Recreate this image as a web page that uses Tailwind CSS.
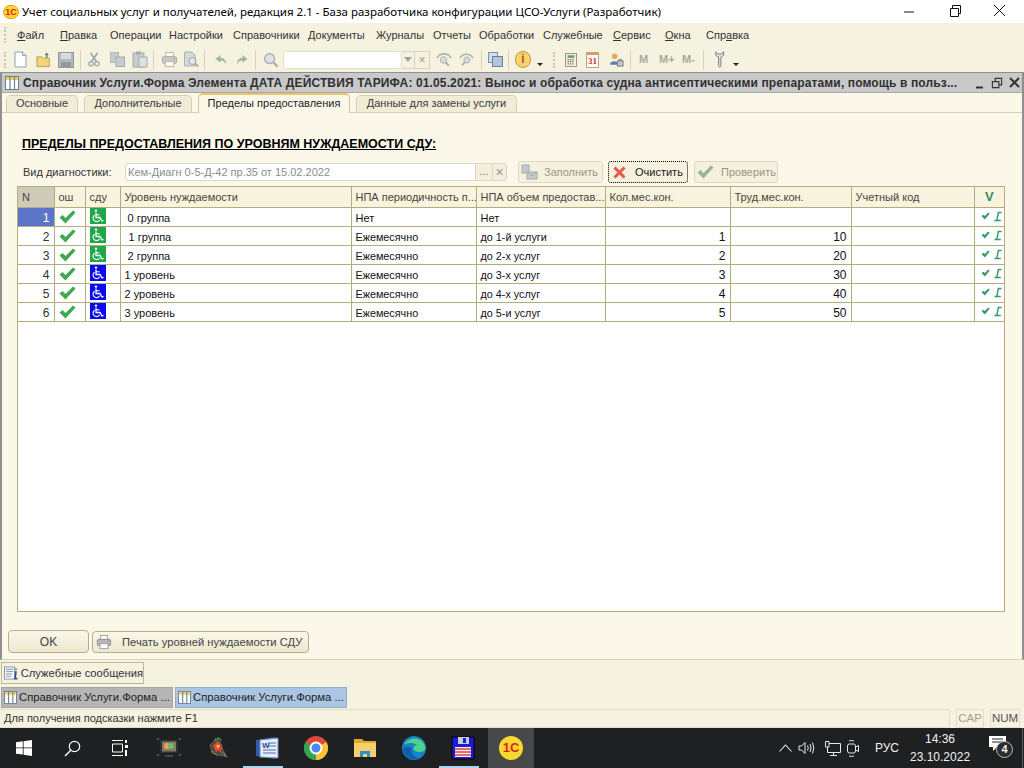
<!DOCTYPE html>
<html lang="ru">
  <head>
    <meta charset="utf-8" />
    <title>Учет социальных услуг</title>
    <script src="https://cdn.jsdelivr.net/npm/@tailwindcss/browser@4"></script>
  </head>
  <body class="w-[1024px] h-[768px] overflow-hidden flex flex-col bg-[#f5f2df] text-[11px] text-[#222] font-['Liberation_Sans',sans-serif]">
    <!-- shared icons -->
    <svg class="hidden">
      <symbol id="check" viewBox="0 0 17 14"><path d="M0.5 7.5 L3.5 5 L6.5 8 L14 0.5 L16.5 2.5 L6.5 13.5 Z" fill="#3fa850" /></symbol>
      <symbol id="wheel" viewBox="0 0 16 16">
        <circle cx="6" cy="2.6" r="1.2" fill="#fff" />
        <path d="M6 4.5 V9.5 H10 L12 13 L13.5 12.3" fill="none" stroke="#fff" stroke-width="1.3" />
        <path d="M6 6.8 H9.5" stroke="#fff" stroke-width="1.1" />
        <path d="M4.6 7.2 A3.5 3.5 0 1 0 9.6 11.8" fill="none" stroke="#fff" stroke-width="1.1" />
      </symbol>
      <symbol id="tick" viewBox="0 0 10 10"><path d="M0.5 5 L3 3.5 L4.3 5 L8 1 L9.6 2.5 L4.3 8.8 Z" fill="#3b9a6a" /></symbol>
      <symbol id="ibar" viewBox="0 0 10 12"><path d="M4.5 1 H9.5 M5.5 1 L3.5 11 M0.5 11 H8.5" fill="none" stroke="#3b9a6a" stroke-width="1.8" /></symbol>
      <symbol id="grid3" viewBox="0 0 14 14">
        <rect x="0.5" y="0.5" width="13" height="13" fill="#fff" stroke="#6b7f96" />
        <rect x="1" y="1" width="12" height="3" fill="#f2d25e" />
        <path d="M5 1 V13 M9.5 1 V13" stroke="#6b7f96" stroke-width="1.2" />
      </symbol>
      <symbol id="lens" viewBox="0 0 18 18"><circle cx="7.5" cy="7.5" r="5.5" fill="#dfe3e6" stroke="#aab2b5" stroke-width="1.6" /><path d="M12 12 L16.5 16.5" stroke="#b5a98a" stroke-width="2.4" /></symbol>
      <symbol id="printer" viewBox="0 0 18 18">
        <rect x="5" y="1.5" width="8" height="5" fill="#fff" stroke="#9a9a9a" />
        <rect x="1.5" y="6" width="15" height="7" rx="1.5" fill="#b8b8b8" stroke="#8a8a8a" />
        <rect x="4.5" y="11" width="9" height="5.5" fill="#fff" stroke="#9a9a9a" />
        <circle cx="14" cy="8" r="0.8" fill="#d05050" />
      </symbol>
    </svg>

    <!-- title bar -->
    <header class="h-[23px] shrink-0 bg-white flex items-center">
      <div class="ml-[3px] w-[16px] h-[14px] rounded-full bg-[#fbd52f] border border-[#e3a21a] text-[#d8261c] text-[9px] leading-[12px] font-bold text-center">1С</div>
      <span class="ml-[3px] text-[11.5px] text-black font-['Noto_Sans',sans-serif] whitespace-nowrap">Учет социальных услуг и получателей, редакция 2.1 - База разработчика конфигурации ЦСО-Услуги (Разработчик)</span>
      <div class="ml-auto mr-[2px] flex items-center text-black">
        <svg class="w-[45px] h-[23px]" viewBox="0 0 45 23"><path d="M18 12 H28" stroke="#111" /></svg>
        <svg class="w-[45px] h-[23px]" viewBox="0 0 45 23"><path d="M19.5 8.5 H27.5 V16.5 H19.5 Z M21.5 8 V5.5 H29.5 V13.5 H27.5" fill="none" stroke="#111" /></svg>
        <svg class="w-[46px] h-[23px]" viewBox="0 0 46 23"><path d="M18 5 L29 16 M29 5 L18 16" stroke="#111" /></svg>
      </div>
    </header>

    <!-- menu -->
    <nav class="h-[24px] shrink-0 flex items-center text-[#333] whitespace-nowrap">
      <div class="ml-[4px] w-[13px] h-[16px] border-l-2 border-dotted border-[#c9c5b0]"></div>
      <span class="w-[43px]"><u>Ф</u>айл</span>
      <span class="w-[50px]"><u>П</u>равка</span>
      <span class="w-[59px]">Операции</span>
      <span class="w-[64px]">Настройки</span>
      <span class="w-[75px]">Справочники</span>
      <span class="w-[68px]">Документы</span>
      <span class="w-[57px]">Журналы</span>
      <span class="w-[46px]">Отчеты</span>
      <span class="w-[64px]">Обработки</span>
      <span class="w-[70px]">Служебные</span>
      <span class="w-[52px]"><u>С</u>ервис</span>
      <span class="w-[41px]"><u>О</u>кна</span>
      <span>Спр<u>а</u>вка</span>
    </nav>

    <!-- toolbar -->
    <div class="h-[25px] shrink-0 flex items-center">
      <div class="ml-[4px] w-[2px] h-[16px] border-l-2 border-dotted border-[#c9c5b0]"></div>
      <svg class="ml-[8px] w-[13px] h-[17px]" viewBox="0 0 13 17"><path d="M1 1 H8.5 L12 4.5 V16 H1 Z" fill="#fff" stroke="#8ea3b8" /><path d="M8.5 1 V4.5 H12" fill="#dbe4ee" stroke="#8ea3b8" /></svg>
      <svg class="ml-[9px] w-[16px] h-[17px]" viewBox="0 0 18 18"><path d="M1 6 H7 L8.5 7.5 H15 V17 H1 Z" fill="#f4d47a" stroke="#b59a45" /><path d="M12 1 L9.5 4 H11 V7 H13 V4 H14.5 Z" fill="#5a8f5a" /></svg>
      <svg class="ml-[6px] w-[16px] h-[16px]" viewBox="0 0 16 16"><rect x="0.5" y="0.5" width="15" height="15" fill="#b3b9bb" stroke="#94999b" /><rect x="3" y="1" width="10" height="6" fill="#d8dcdd" /><rect x="3" y="10" width="10" height="5" fill="#94999b" /></svg>
      <div class="ml-[6px] w-px h-[20px] bg-[#d5d1bb]"></div>
      <svg class="ml-[7px] w-[12px] h-[17px]" viewBox="0 0 14 17"><path d="M3 1 L10 11 M11 1 L4 11" stroke="#9aa7ae" stroke-width="2" /><circle cx="3.5" cy="13.5" r="2.5" fill="none" stroke="#9aa7ae" stroke-width="1.5" /><circle cx="10.5" cy="13.5" r="2.5" fill="none" stroke="#9aa7ae" stroke-width="1.5" /></svg>
      <svg class="ml-[10px] w-[15px] h-[15px]" viewBox="0 0 15 15"><rect x="0.5" y="0.5" width="8" height="10" fill="#c6ccce" stroke="#b3b9bb" /><rect x="6" y="5" width="8.5" height="9.5" fill="#c6ccce" stroke="#a5abad" /></svg>
      <svg class="ml-[7px] w-[16px] h-[17px]" viewBox="0 0 16 17"><rect x="1" y="2" width="11" height="14" fill="#c6ccce" stroke="#a5abad" /><rect x="4" y="0.5" width="5" height="3" fill="#a5abad" /><rect x="7" y="6" width="8" height="10" fill="#dfe2e3" stroke="#a5abad" /></svg>
      <div class="ml-[5px] w-px h-[20px] bg-[#d5d1bb]"></div>
      <svg class="ml-[7px] w-[17px] h-[17px] opacity-70" viewBox="0 0 18 18"><use href="#printer" /></svg>
      <svg class="ml-[5px] w-[16px] h-[17px]" viewBox="0 0 16 17"><path d="M1.5 1 H9 L12 4 V15 H1.5 Z" fill="#d3d8da" stroke="#aeb4b6" /><circle cx="9.5" cy="10" r="3.5" fill="#e5e8e9" stroke="#99a0a2" /><path d="M12 12.5 L15 15.5" stroke="#b5a98a" stroke-width="2" /></svg>
      <div class="ml-[5px] w-px h-[20px] bg-[#d5d1bb]"></div>
      <svg class="ml-[10px] w-[12px] h-[11px]" viewBox="0 0 13 11"><path d="M6 0.5 L0.5 5 L6 9 V6.5 C9 6.5 10.5 8 12 10.5 C12 6 9.5 3.5 6 3.5 Z" fill="#a3b6ac" /></svg>
      <svg class="ml-[9px] w-[12px] h-[11px]" viewBox="0 0 13 11"><path d="M7 0.5 L12.5 5 L7 9 V6.5 C4 6.5 2.5 8 1 10.5 C1 6 3.5 3.5 7 3.5 Z" fill="#a3b6ac" /></svg>
      <div class="ml-[7px] w-px h-[20px] bg-[#d5d1bb]"></div>
      <svg class="ml-[7px] w-[16px] h-[16px]" viewBox="0 0 18 18"><use href="#lens" /></svg>
      <div class="ml-[4px] w-[119px] h-[18px] bg-white rounded-[3px] border border-[#e2decb]"></div>
      <div class="w-[13px] h-[18px] flex items-center justify-center border border-l-0 border-[#d5d1bb]"><span class="border-x-[4px] border-t-[5px] border-x-transparent border-t-[#a0a4a5]"></span></div>
      <div class="w-[15px] h-[18px] flex items-center justify-center border border-l-0 border-[#d5d1bb] text-[#9aa0a2] text-[12px] leading-none">×</div>
      <svg class="ml-[6px] w-[16px] h-[16px]" viewBox="0 0 17 16"><path d="M1 6 C4 0 13 0 16 6" fill="none" stroke="#a9b8b0" stroke-width="1.8" /><circle cx="8" cy="8" r="3.5" fill="#d5dadb" stroke="#aab2b5" /><path d="M10.5 10.5 L13.5 14" stroke="#b5a98a" stroke-width="2" /></svg>
      <svg class="ml-[7px] w-[15px] h-[16px]" viewBox="0 0 17 16"><path d="M1 6 C4 0 13 0 16 6" fill="none" stroke="#a9b8b0" stroke-width="1.8" /><circle cx="9" cy="8" r="3.5" fill="#d5dadb" stroke="#aab2b5" /><path d="M6.5 10.5 L3.5 14" stroke="#b5a98a" stroke-width="2" /></svg>
      <div class="ml-[7px] w-px h-[20px] bg-[#d5d1bb]"></div>
      <svg class="ml-[6px] w-[15px] h-[15px]" viewBox="0 0 15 15"><rect x="0.5" y="0.5" width="9" height="10" fill="#cfe0ee" stroke="#7d8fa3" /><rect x="4.5" y="4.5" width="10" height="10" fill="#aec7de" stroke="#6c7f94" /></svg>
      <div class="ml-[5px] w-px h-[20px] bg-[#d5d1bb]"></div>
      <div class="ml-[6px] w-[16px] h-[17px] rounded-full bg-[#f6d46d] border border-[#c8973a] text-[#b5531c] text-[12px] leading-[15px] font-bold text-center">i</div>
      <span class="ml-[6px] mt-[10px] border-x-[3px] border-t-[3px] border-x-transparent border-t-[#222]"></span>
      <div class="ml-[10px] w-[2px] h-[16px] border-l-2 border-dotted border-[#c9c5b0]"></div>
      <svg class="ml-[10px] w-[12px] h-[16px]" viewBox="0 0 14 16"><rect x="0.5" y="0.5" width="13" height="15" fill="#eef0e6" stroke="#8c8f72" /><rect x="3" y="2.5" width="8" height="3" fill="#6f9a62" /><path d="M3 7.5 H11 M3 10 H11 M3 12.5 H11" stroke="#7a6a3a" stroke-dasharray="1.5 1.2" stroke-width="1.4" /></svg>
      <div class="ml-[9px] w-[13px] h-[16px] bg-white border border-[#b6a889] border-t-[3px] border-t-[#d79a6a] text-[#d92a1e] text-[9px] leading-[12px] font-bold text-center font-['Liberation_Serif',serif]">31</div>
      <svg class="ml-[10px] w-[15px] h-[16px]" viewBox="0 0 16 16"><circle cx="6" cy="4" r="3" fill="#e2a95c" /><path d="M1 13 C1 8 10 8 10 13 Z" fill="#5b7fb0" /><rect x="9" y="9" width="6" height="5.5" fill="#c4cbd0" stroke="#717b82" /><path d="M10.5 9 V7.5 H13.5 V9" fill="none" stroke="#717b82" /></svg>
      <div class="ml-[6px] w-px h-[20px] bg-[#d5d1bb]"></div>
      <div class="ml-[8px] w-[12px] text-[#a9a9a0] font-bold text-[11px]">M</div>
      <div class="ml-[8px] w-[18px] text-[#a9a9a0] font-bold text-[11px] whitespace-nowrap">M+</div>
      <div class="ml-[5px] w-[17px] text-[#a9a9a0] font-bold text-[11px] whitespace-nowrap">M-</div>
      <div class="ml-[4px] w-px h-[20px] bg-[#d5d1bb]"></div>
      <svg class="ml-[10px] w-[11px] h-[19px]" viewBox="0 0 12 19"><path d="M2 1 V5 L5 7 V16 C5 18.5 7.5 18.5 7.5 16 V7 L10.5 5 V1 L8 3.5 H4.5 Z" fill="#dfe1e0" stroke="#777" /></svg>
      <span class="ml-[8px] mt-[10px] border-x-[3px] border-t-[3px] border-x-transparent border-t-[#222]"></span>
    </div>

    <!-- document window -->
    <section class="flex-1 min-h-0 flex flex-col border-l-2 border-r-2 border-t border-b border-[#8f8f8f] border-b-[#d5d1bb] bg-[#fbf8ea]">
      <div class="h-[20px] shrink-0 bg-[#c9c9c9] flex items-center border-b border-[#a9a9a9]">
        <svg class="ml-[3px] w-[14px] h-[14px]" viewBox="0 0 14 14"><use href="#grid3" /></svg>
        <span class="ml-[4px] font-bold text-[12px] tracking-[0.13px] text-[#303030] whitespace-nowrap">Справочник Услуги.Форма Элемента ДАТА ДЕЙСТВИЯ ТАРИФА: 01.05.2021: Вынос и обработка судна антисептическими препаратами, помощь в польз...</span>
        <div class="ml-auto flex items-center gap-[6px] pr-[2px]">
          <svg class="w-[10px] h-[12px]" viewBox="0 0 10 12"><path d="M1 10.5 H8" stroke="#333" stroke-width="2" /></svg>
          <svg class="w-[12px] h-[12px]" viewBox="0 0 13 12"><path d="M1.5 4.5 H8.5 V11 H1.5 Z M4.5 4 V1 H11.5 V8 H9" fill="none" stroke="#333" stroke-width="1.2" /></svg>
          <svg class="w-[11px] h-[11px]" viewBox="0 0 11 11"><path d="M1 1 L10 10 M10 1 L1 10" stroke="#333" stroke-width="2" /></svg>
        </div>
      </div>

      <!-- tabs -->
      <div class="h-[19px] shrink-0 flex items-end pl-[4px] gap-[6px] text-[#3a3a3a] relative z-10 whitespace-nowrap">
        <div class="w-[72px] h-[17px] leading-[15px] text-center bg-[#f1ecd6] border border-b-0 border-[#d6d0b2] rounded-t-[5px]">Основные</div>
        <div class="w-[108px] h-[17px] leading-[15px] text-center bg-[#f1ecd6] border border-b-0 border-[#d6d0b2] rounded-t-[5px]">Дополнительные</div>
        <div class="w-[152px] h-[20px] leading-[17px] text-center text-[#222] bg-[#fbf8ea] border border-b-0 border-t-2 border-[#d6c690] border-t-[#ecc46a] rounded-t-[5px] -mb-px">Пределы предоставления</div>
        <div class="w-[161px] h-[17px] leading-[15px] text-center bg-[#f1ecd6] border border-b-0 border-[#d6d0b2] rounded-t-[5px]">Данные для замены услуги</div>
      </div>

      <div class="flex-1 min-h-0 flex flex-col border-t border-[#d6d0b2] pl-[15px] pr-[17px]">
        <h1 class="pl-[5px] mt-[24px] h-[16px] text-[12.5px] leading-[15px] font-bold text-black underline whitespace-nowrap">ПРЕДЕЛЫ ПРЕДОСТАВЛЕНИЯ ПО УРОВНЯМ НУЖДАЕМОСТИ СДУ:</h1>

        <!-- diagnostics row -->
        <div class="mt-[7px] h-[24px] flex items-center pl-[6px] text-[#333] whitespace-nowrap">
          <span class="w-[102px]">Вид диагностики:</span>
          <div class="w-[351px] h-[18px] leading-[16px] pl-[2px] bg-white rounded-l-[3px] border border-[#d9d6c6] text-[#8c8c8c]">Кем-Диагн 0-5-Д-42 пр.35 от 15.02.2022</div>
          <div class="w-[16px] h-[18px] leading-[14px] text-center bg-[#f3efdc] border-y border-[#d9d6c6] text-[#777]">...</div>
          <div class="w-[15px] h-[18px] flex items-center justify-center bg-[#f3efdc] border border-[#d9d6c6] rounded-r-[3px] text-[#8f9394] text-[14px] leading-none">×</div>
          <button class="ml-[11px] w-[85px] h-[22px] flex items-center bg-[#f5f1dc] border border-[#dcd8c0] rounded-[3px] text-[#999586]">
            <svg class="ml-[2px] w-[17px] h-[17px]" viewBox="0 0 17 17"><rect x="1" y="1" width="7" height="8" fill="#c3c9cb" stroke="#a8aeb0" /><rect x="6" y="8" width="10" height="7" fill="#c3c9cb" stroke="#a8aeb0" /><path d="M6 8 L11 12 L16 8" fill="none" stroke="#a8aeb0" /></svg>
            <span class="ml-[6px]">Заполнить</span>
          </button>
          <button class="ml-[5px] w-[80px] h-[22px] flex items-center bg-[#f5f1dc] border border-dotted border-black rounded-[3px] text-[#222]">
            <svg class="ml-[4px] w-[13px] h-[13px]" viewBox="0 0 13 13"><path d="M1.5 1.5 L11.5 11.5 M11.5 1.5 L1.5 11.5" stroke="#e6584a" stroke-width="3" /></svg>
            <span class="ml-[9px]">Очистить</span>
          </button>
          <button class="ml-[6px] w-[84px] h-[22px] flex items-center bg-[#f5f1dc] border border-[#dcd8c0] rounded-[3px] text-[#999586]">
            <svg class="ml-[2px] w-[17px] h-[14px]" viewBox="0 0 17 14"><path d="M0.5 7.5 L3.5 5 L6.5 8 L14 0.5 L16.5 2.5 L6.5 13.5 Z" fill="#9db19c" /></svg>
            <span class="ml-[7px]">Проверить</span>
          </button>
        </div>

        <!-- table -->
        <div class="mt-[2px] h-[426px] bg-white border border-[#b5aa80] overflow-hidden">
          <table class="table-fixed border-collapse w-[986px] text-[10.8px] text-[#111]">
            <colgroup>
              <col class="w-[36px]" /><col class="w-[31px]" /><col class="w-[35px]" /><col class="w-[231px]" /><col class="w-[125px]" /><col class="w-[129px]" /><col class="w-[125px]" /><col class="w-[121px]" /><col class="w-[123px]" /><col class="w-[30px]" />
            </colgroup>
            <thead class="text-[11px] text-[#4a4635] font-normal">
              <tr class="h-[20px] bg-[#f7f3df]">
                <th class="bg-[#cfcbb8] border border-t-0 border-l-0 border-[#b5aa80] font-normal text-left pl-[4px]">N</th>
                <th class="border border-t-0 border-[#b5aa80] font-normal text-left pl-[4px]">ош</th>
                <th class="border border-t-0 border-[#b5aa80] font-normal text-left pl-[4px]">сду</th>
                <th class="border border-t-0 border-[#b5aa80] font-normal text-left pl-[4px]">Уровень нуждаемости</th>
                <th class="border border-t-0 border-[#b5aa80] font-normal text-left pl-[4px] whitespace-nowrap overflow-hidden">НПА периодичность п...</th>
                <th class="border border-t-0 border-[#b5aa80] font-normal text-left pl-[4px] whitespace-nowrap overflow-hidden">НПА объем предостав...</th>
                <th class="border border-t-0 border-[#b5aa80] font-normal text-left pl-[4px]">Кол.мес.кон.</th>
                <th class="border border-t-0 border-[#b5aa80] font-normal text-left pl-[4px]">Труд.мес.кон.</th>
                <th class="border border-t-0 border-[#b5aa80] font-normal text-left pl-[4px]">Учетный код</th>
                <th class="border border-t-0 border-r-0 border-[#b5aa80] font-bold text-center text-[13px] text-[#3b8a5e]">V</th>
              </tr>
            </thead>
            <tbody class="leading-[14px] [&>tr>td:not(.align-top)]:pt-[2px]">
              <tr class="h-[19px]">
                <td class="bg-[#5b76c8] text-white text-right pr-[4px] text-[12px] border border-l-0 border-[#b5aa80]">1</td>
                <td class="border border-[#b5aa80] pl-[4px] pt-[2px] align-top"><svg class="block w-[17px] h-[14px]"><use href="#check" /></svg></td>
                <td class="border border-[#b5aa80] pl-[4px] align-top"><div class="w-[16px] h-[16px] bg-[#21a64a]"><svg class="w-[16px] h-[16px]"><use href="#wheel" /></svg></div></td>
                <td class="border border-[#b5aa80] pl-[7px] text-[11px]">0 группа</td>
                <td class="border border-[#b5aa80] pl-[4px] text-[11px]">Нет</td>
                <td class="border border-[#b5aa80] pl-[4px] text-[11px]">Нет</td>
                <td class="border border-[#b5aa80] text-right pr-[4px] text-[12px]"></td>
                <td class="border border-[#b5aa80] text-right pr-[4px] text-[12px]"></td>
                <td class="border border-[#b5aa80]"></td>
                <td class="border border-r-0 border-[#b5aa80] pl-[6px] align-top pt-[3px]"><div class="flex items-center gap-[4px]"><svg class="w-[9px] h-[10px]"><use href="#tick" /></svg><svg class="w-[8px] h-[11px]"><use href="#ibar" /></svg></div></td>
              </tr>
              <tr class="h-[19px]">
                <td class="text-right pr-[4px] text-[12px] text-[#333] border border-l-0 border-[#b5aa80]">2</td>
                <td class="border border-[#b5aa80] pl-[4px] pt-[2px] align-top"><svg class="block w-[17px] h-[14px]"><use href="#check" /></svg></td>
                <td class="border border-[#b5aa80] pl-[4px] align-top"><div class="w-[16px] h-[16px] bg-[#21a64a]"><svg class="w-[16px] h-[16px]"><use href="#wheel" /></svg></div></td>
                <td class="border border-[#b5aa80] pl-[8px] text-[11px]">1 группа</td>
                <td class="border border-[#b5aa80] pl-[4px]">Ежемесячно</td>
                <td class="border border-[#b5aa80] pl-[4px]">до 1-й услуги</td>
                <td class="border border-[#b5aa80] text-right pr-[4px] text-[12px]">1</td>
                <td class="border border-[#b5aa80] text-right pr-[4px] text-[12px]">10</td>
                <td class="border border-[#b5aa80]"></td>
                <td class="border border-r-0 border-[#b5aa80] pl-[6px] align-top pt-[3px]"><div class="flex items-center gap-[4px]"><svg class="w-[9px] h-[10px]"><use href="#tick" /></svg><svg class="w-[8px] h-[11px]"><use href="#ibar" /></svg></div></td>
              </tr>
              <tr class="h-[19px]">
                <td class="text-right pr-[4px] text-[12px] text-[#333] border border-l-0 border-[#b5aa80]">3</td>
                <td class="border border-[#b5aa80] pl-[4px] pt-[2px] align-top"><svg class="block w-[17px] h-[14px]"><use href="#check" /></svg></td>
                <td class="border border-[#b5aa80] pl-[4px] align-top"><div class="w-[16px] h-[16px] bg-[#21a64a]"><svg class="w-[16px] h-[16px]"><use href="#wheel" /></svg></div></td>
                <td class="border border-[#b5aa80] pl-[7px] text-[11px]">2 группа</td>
                <td class="border border-[#b5aa80] pl-[4px]">Ежемесячно</td>
                <td class="border border-[#b5aa80] pl-[4px]">до 2-х услуг</td>
                <td class="border border-[#b5aa80] text-right pr-[4px] text-[12px]">2</td>
                <td class="border border-[#b5aa80] text-right pr-[4px] text-[12px]">20</td>
                <td class="border border-[#b5aa80]"></td>
                <td class="border border-r-0 border-[#b5aa80] pl-[6px] align-top pt-[3px]"><div class="flex items-center gap-[4px]"><svg class="w-[9px] h-[10px]"><use href="#tick" /></svg><svg class="w-[8px] h-[11px]"><use href="#ibar" /></svg></div></td>
              </tr>
              <tr class="h-[19px]">
                <td class="text-right pr-[4px] text-[12px] text-[#333] border border-l-0 border-[#b5aa80]">4</td>
                <td class="border border-[#b5aa80] pl-[4px] pt-[2px] align-top"><svg class="block w-[17px] h-[14px]"><use href="#check" /></svg></td>
                <td class="border border-[#b5aa80] pl-[4px] align-top"><div class="w-[16px] h-[16px] bg-[#0a0af0]"><svg class="w-[16px] h-[16px]"><use href="#wheel" /></svg></div></td>
                <td class="border border-[#b5aa80] pl-[4px] text-[11px]">1 уровень</td>
                <td class="border border-[#b5aa80] pl-[4px]">Ежемесячно</td>
                <td class="border border-[#b5aa80] pl-[4px]">до 3-х услуг</td>
                <td class="border border-[#b5aa80] text-right pr-[4px] text-[12px]">3</td>
                <td class="border border-[#b5aa80] text-right pr-[4px] text-[12px]">30</td>
                <td class="border border-[#b5aa80]"></td>
                <td class="border border-r-0 border-[#b5aa80] pl-[6px] align-top pt-[3px]"><div class="flex items-center gap-[4px]"><svg class="w-[9px] h-[10px]"><use href="#tick" /></svg><svg class="w-[8px] h-[11px]"><use href="#ibar" /></svg></div></td>
              </tr>
              <tr class="h-[19px]">
                <td class="text-right pr-[4px] text-[12px] text-[#333] border border-l-0 border-[#b5aa80]">5</td>
                <td class="border border-[#b5aa80] pl-[4px] pt-[2px] align-top"><svg class="block w-[17px] h-[14px]"><use href="#check" /></svg></td>
                <td class="border border-[#b5aa80] pl-[4px] align-top"><div class="w-[16px] h-[16px] bg-[#0a0af0]"><svg class="w-[16px] h-[16px]"><use href="#wheel" /></svg></div></td>
                <td class="border border-[#b5aa80] pl-[4px] text-[11px]">2 уровень</td>
                <td class="border border-[#b5aa80] pl-[4px]">Ежемесячно</td>
                <td class="border border-[#b5aa80] pl-[4px]">до 4-х услуг</td>
                <td class="border border-[#b5aa80] text-right pr-[4px] text-[12px]">4</td>
                <td class="border border-[#b5aa80] text-right pr-[4px] text-[12px]">40</td>
                <td class="border border-[#b5aa80]"></td>
                <td class="border border-r-0 border-[#b5aa80] pl-[6px] align-top pt-[3px]"><div class="flex items-center gap-[4px]"><svg class="w-[9px] h-[10px]"><use href="#tick" /></svg><svg class="w-[8px] h-[11px]"><use href="#ibar" /></svg></div></td>
              </tr>
              <tr class="h-[19px]">
                <td class="text-right pr-[4px] text-[12px] text-[#333] border border-l-0 border-[#b5aa80]">6</td>
                <td class="border border-[#b5aa80] pl-[4px] pt-[2px] align-top"><svg class="block w-[17px] h-[14px]"><use href="#check" /></svg></td>
                <td class="border border-[#b5aa80] pl-[4px] align-top"><div class="w-[16px] h-[16px] bg-[#0a0af0]"><svg class="w-[16px] h-[16px]"><use href="#wheel" /></svg></div></td>
                <td class="border border-[#b5aa80] pl-[4px] text-[11px]">3 уровень</td>
                <td class="border border-[#b5aa80] pl-[4px]">Ежемесячно</td>
                <td class="border border-[#b5aa80] pl-[4px]">до 5-и услуг</td>
                <td class="border border-[#b5aa80] text-right pr-[4px] text-[12px]">5</td>
                <td class="border border-[#b5aa80] text-right pr-[4px] text-[12px]">50</td>
                <td class="border border-[#b5aa80]"></td>
                <td class="border border-r-0 border-[#b5aa80] pl-[6px] align-top pt-[3px]"><div class="flex items-center gap-[4px]"><svg class="w-[9px] h-[10px]"><use href="#tick" /></svg><svg class="w-[8px] h-[11px]"><use href="#ibar" /></svg></div></td>
              </tr>
            </tbody>
          </table>
        </div>

        <!-- bottom buttons -->
        <div class="mt-[18px] flex items-center -ml-[9px] text-[#444]">
          <button class="w-[81px] h-[23px] bg-gradient-to-b from-[#fbf8ea] to-[#ece7cf] border border-[#b5ad8c] rounded-[4px] text-[12px]">OK</button>
          <button class="ml-[3px] w-[217px] h-[22px] mt-px flex items-center bg-gradient-to-b from-[#fbf8ea] to-[#ece7cf] border border-[#b5ad8c] rounded-[4px]">
            <svg class="ml-[3px] w-[16px] h-[16px]"><use href="#printer" /></svg>
            <span class="ml-[10px] text-[11.2px]">Печать уровней нуждаемости СДУ</span>
          </button>
        </div>
      </div>
    </section>

    <!-- service messages, window list, status -->
    <div class="h-[26px] shrink-0 bg-[#f5f2df] flex items-end pl-[1px] pb-[2px]">
      <div class="w-[143px] h-[22px] pt-px flex items-center border border-[#bdb89c] text-[#333] text-[11.2px] whitespace-nowrap">
        <svg class="ml-[2px] w-[16px] h-[15px]" viewBox="0 0 16 15"><rect x="0.5" y="0.5" width="11" height="13" fill="#fff" stroke="#7a8fa8" /><path d="M2 3 H10 M2 5.5 H10 M2 8 H9 M2 10.5 H8" stroke="#6d87a6" /><path d="M13 2 V3.5 M13 5 L12 13 H14.5" stroke="#28558a" stroke-width="1.8" fill="none" /></svg>
        <span class="ml-[2px]">Служебные сообщения</span>
      </div>
    </div>
    <div class="h-[22px] shrink-0 flex items-center pl-[1px] gap-px text-[11.3px] text-[#222] whitespace-nowrap">
      <div class="w-[172px] h-[21px] flex items-center bg-[#b5b5b5] border border-[#a5a5a5]">
        <svg class="ml-[2px] w-[13px] h-[13px]" viewBox="0 0 14 14"><use href="#grid3" /></svg>
        <span class="ml-[2px]">Справочник Услуги.Форма ...</span>
      </div>
      <div class="ml-[1px] w-[172px] h-[21px] flex items-center bg-[#aac6e4] border border-[#95aec8]">
        <svg class="ml-[2px] w-[13px] h-[13px]" viewBox="0 0 14 14"><use href="#grid3" /></svg>
        <span class="ml-[2px]">Справочник Услуги.Форма ...</span>
      </div>
    </div>
    <footer class="h-[20px] shrink-0 flex items-center text-[#333] text-[11px] gap-[6px] pr-[4px]">
      <div class="flex-1 h-[19px] pl-[4px] leading-[17px] border border-l-0 border-[#e2decb]">Для получения подсказки нажмите F1</div>
      <div class="h-[19px] w-[28px] text-center border border-[#e2decb] text-[#a39f8a] leading-[17px] text-[11.5px]">CAP</div>
      <div class="h-[19px] w-[30px] text-center border border-[#e2decb] text-[#555] leading-[17px] text-[11.5px]">NUM</div>
    </footer>

    <!-- windows taskbar -->
    <div class="h-[40px] shrink-0 bg-[#1f2022] flex items-center text-white">
      <div class="w-[48px] h-[40px] flex items-center justify-center">
        <svg class="w-[16px] h-[16px]" viewBox="0 0 16 16"><path d="M0 2.3 L6.8 1.3 V7.5 H0 Z M7.6 1.2 L16 0 V7.5 H7.6 Z M0 8.3 H6.8 V14.6 L0 13.7 Z M7.6 8.3 H16 V16 L7.6 14.8 Z" fill="#fff" /></svg>
      </div>
      <div class="w-[48px] h-[40px] flex items-center justify-center">
        <svg class="w-[17px] h-[17px]" viewBox="0 0 17 17"><circle cx="10.5" cy="6.5" r="5.2" fill="none" stroke="#fff" stroke-width="1.2" /><path d="M6.8 10.2 L1 16" stroke="#fff" stroke-width="1.4" /></svg>
      </div>
      <div class="w-[48px] h-[40px] flex items-center justify-center">
        <svg class="w-[16px] h-[16px]" viewBox="0 0 16 16"><path d="M0 0.5 H11 M0 15.5 H11 M0.5 4 H10.5 V12 H0.5 Z" fill="none" stroke="#fff" /><rect x="13" y="0" width="2" height="3" fill="#fff" /><rect x="13" y="5" width="3" height="3" fill="#fff" /><rect x="13" y="10" width="2" height="6" fill="#fff" /></svg>
      </div>
      <div class="w-[49px] h-[40px] flex items-center justify-center">
        <svg class="w-[24px] h-[20px]" viewBox="0 0 24 20"><rect x="3" y="2" width="18" height="13" fill="#2a3236" /><rect x="5" y="3.5" width="14" height="10" fill="#8a7a5a" /><circle cx="10" cy="8" r="3" fill="#e8a45a" /><circle cx="14" cy="8" r="3" fill="#6ab87a" /><path d="M8 18 H16" stroke="#6a7478" /><path d="M0 1 H2 M22 1 H24 M0 17 H2 M22 17 H24" stroke="#3ba4c8" /></svg>
      </div>
      <div class="w-[49px] h-[40px] flex items-center justify-center">
        <svg class="w-[24px] h-[24px]" viewBox="0 0 24 24"><path d="M4 9 L10 3 L15 7 L17 14 L21 21 L12 19 L6 17 Z" fill="#4a4a40" stroke="#8a8a78" stroke-dasharray="1 1" /><path d="M7 10 L12 5 L14 8 L17 13 L10 16 Z" fill="#e5482a" /><path d="M10 9 L14 9 L12 13 Z" fill="#efc14a" /><path d="M9 4 L13 2 L15 5" fill="none" stroke="#5fa85a" stroke-width="2" stroke-dasharray="1.5 1" /><path d="M14 15 L20 20 M6 15 L11 20" stroke="#d8b44a" stroke-dasharray="1.5 1" /></svg>
      </div>
      <div class="w-[49px] h-[40px] flex items-center justify-center relative">
        <svg class="w-[24px] h-[24px]" viewBox="0 0 24 24"><path d="M1 4 L20 1 V23 L1 20 Z" fill="#2f5da8" /><path d="M5 4 L23 2 V22 L5 21 Z" fill="#e6edf6" stroke="#6f8fc0" /><path d="M13 7 H21 M13 10 H21 M8 14 H21 M8 17 H21" stroke="#4a72b0" /><text x="7" y="12" font-size="8" font-weight="bold" fill="#1f4a96">W</text></svg>
        <div class="absolute left-[1px] bottom-0 w-[40px] h-[2px] bg-[#a9d6ee]"></div>
      </div>
      <div class="w-[49px] h-[40px] flex items-center justify-center">
        <svg class="w-[24px] h-[24px]" viewBox="0 0 24 24"><circle cx="12" cy="12" r="12" fill="#dd4a3d" /><path d="M12 12 L22.4 6 A12 12 0 0 1 12 24 Z" fill="#f7c52f" /><path d="M12 12 L12 24 A12 12 0 0 1 1.6 6 Z" fill="#2fa650" /><circle cx="12" cy="12" r="5.5" fill="#4a89f0" stroke="#fff" stroke-width="2" /></svg>
      </div>
      <div class="w-[49px] h-[40px] flex items-center justify-center">
        <svg class="w-[22px] h-[20px]" viewBox="0 0 22 20"><path d="M0 1 H8 L10 3 H22 V19 H0 Z" fill="#e5a92f" /><rect x="0" y="5" width="22" height="14" fill="#f6d06a" /><path d="M6 19 V13 H16 V19 H13 V16 H9 V19 Z" fill="#2f8fd0" /></svg>
      </div>
      <div class="w-[49px] h-[40px] flex items-center justify-center">
        <svg class="w-[24px] h-[24px]" viewBox="0 0 24 24"><circle cx="12" cy="12" r="12" fill="#1783c8" /><path d="M2 9 C5 1 20 -1 23.5 11 C24 16 17 17 13 15 C10 13 12 9 15 9 C10 6 4 7 2 9 Z" fill="#4fd18a" /><path d="M1 13 C1 20 10 26 18 22 C12 22 8 17 10 12 C6 10 2 11 1 13 Z" fill="#0f5ea8" /></svg>
      </div>
      <div class="w-[49px] h-[40px] flex items-center justify-center relative">
        <svg class="w-[24px] h-[24px]" viewBox="0 0 24 24"><rect x="1" y="1" width="22" height="22" fill="#1b1bdd" stroke="#000" /><rect x="7" y="1" width="11" height="7" fill="#c8ccd8" /><rect x="12" y="2" width="3" height="5" fill="#1b1bdd" /><rect x="4" y="11" width="16" height="10" fill="#f4f4f4" /><path d="M4 13 H20 M4 16 H20 M4 19 H20" stroke="#e23a3a" stroke-width="1.4" /></svg>
        <div class="absolute left-[1px] bottom-0 w-[40px] h-[2px] bg-[#a9d6ee]"></div>
      </div>
      <div class="w-[46px] h-[40px] flex items-center justify-center bg-[#47484a] ml-[1px]">
        <div class="w-[24px] h-[24px] rounded-full bg-[#f9d92f] text-[#d8261c] text-[13px] leading-[24px] font-bold text-center">1С</div>
      </div>

      <!-- tray -->
      <div class="ml-auto flex items-center text-[#f2f2f2] whitespace-nowrap">
        <svg class="w-[13px] h-[8px]" viewBox="0 0 13 8"><path d="M0.5 7.5 L6.5 1 L12.5 7.5" fill="none" stroke="#e8e8e8" stroke-width="1.1" /></svg>
        <svg class="ml-[6px] w-[17px] h-[14px]" viewBox="0 0 17 14"><path d="M1 5 H3.5 L7 1.5 V12.5 L3.5 9 H1 Z" fill="none" stroke="#e8e8e8" /><path d="M9.5 4.5 Q11 7 9.5 9.5 M12 3 Q14 7 12 11 M14.5 1.5 Q17 7 14.5 12.5" fill="none" stroke="#e8e8e8" /></svg>
        <svg class="ml-[10px] w-[16px] h-[15px]" viewBox="0 0 16 15"><path d="M0.5 0.5 H4 V6 H0.5 Z M4 2.5 H15.5 V11.5 H2.5 V6 M5 14.5 H12 M8.5 11.5 V14.5" fill="none" stroke="#e8e8e8" /></svg>
        <svg class="ml-[6px] w-[12px] h-[17px]" viewBox="0 0 12 17"><rect x="0.5" y="4" width="8" height="9" rx="2" fill="none" stroke="#e8e8e8" /><path d="M8.5 7 L11.5 5.5 V11.5 L8.5 10 M2 1 Q4.5 0 7 1 M2 16 Q4.5 17 7 16" fill="none" stroke="#e8e8e8" /></svg>
        <span class="ml-[16px] text-[12px]">РУС</span>
        <div class="ml-[11px] w-[60px] text-center text-[12px] leading-[18px]"><div>14:36</div><div>23.10.2022</div></div>
        <div class="ml-[19px] w-[24px] h-[24px] relative">
          <svg class="w-[17px] h-[15px]" viewBox="0 0 17 15"><path d="M0 0 H17 V11 H8 L4 15 V11 H0 Z" fill="#fff" /><path d="M3 3 H14 M3 6 H14" stroke="#1f2022" /></svg>
          <div class="absolute left-[7px] top-[5px] w-[17px] h-[17px] rounded-full bg-[#2b2c2e] border border-[#bbb] text-[11px] leading-[15px] font-bold text-center">4</div>
        </div>
        <div class="ml-[9px] mr-[1px] w-px h-[40px] bg-[#5a5a5a]"></div>
      </div>
    </div>
  </body>
</html>
